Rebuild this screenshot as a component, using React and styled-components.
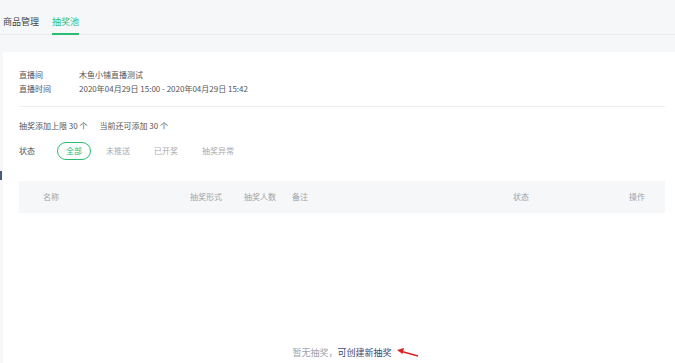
import React from "react";
import styled, { createGlobalStyle, css } from "styled-components";

const GlobalStyle = createGlobalStyle`
  html, body {
    margin: 0;
    padding: 0;
    background: #f6f7f9;
    font-family: "Noto Sans CJK SC", "Noto Sans", sans-serif;
    color: #555;
  }
  * { box-sizing: border-box; }
`;

const Page = styled.div`
  position: relative;
  min-height: 363px;
  display: flex;
  flex-direction: column;
`;

const EdgeMark = styled.span`
  position: absolute;
  left: 0;
  top: 171px;
  width: 2px;
  height: 9px;
  background: #4a5a7a;
`;

const TabBar = styled.div`
  display: flex;
  gap: 13px;
  height: 35px;
  padding-left: 3px;
  border-bottom: 1px solid #e9ebee;
`;

const Tab = styled.div`
  font-size: 9px;
  line-height: 14px;
  padding-top: 15px;
  height: 35px;
  color: #444;
  border-bottom: 2px solid transparent;
  margin-bottom: -1px;
  ${(p) =>
    p.active &&
    css`
      color: #2bbd71;
      border-bottom-color: #2bbd71;
    `}
`;

const Card = styled.div`
  flex: 1;
  margin: 17px 0 0 3px;
  background: #fff;
  padding: 16px 10px 0 16px;
  font-size: 8px;
  line-height: 14px;
`;

const InfoRow = styled.div`
  display: flex;
`;

const Label = styled.span`
  width: 60px;
  color: #555;
`;

const Value = styled.span`
  color: #555;
`;

const Divider = styled.div`
  height: 1px;
  background: #eceef1;
  margin: 10px 0 12px;
`;

const Quota = styled.div`
  display: flex;
  gap: 12px;
  color: #555;
`;

const FilterRow = styled.div`
  display: flex;
  align-items: center;
  gap: 6px;
  margin-top: 9px;
`;

const FilterLabel = styled.span`
  width: 32px;
`;

const Option = styled.span`
  height: 18px;
  line-height: 16px;
  padding: 0 8px;
  border: 1px solid transparent;
  border-radius: 9px;
  color: #a8abb0;
  ${(p) =>
    p.active &&
    css`
      color: #2bbd71;
      border-color: #2bbd71;
    `}
`;

const TableHead = styled.div`
  display: grid;
  grid-template-columns: 147px 54px 48px 221px 116px 1fr;
  align-items: center;
  height: 32px;
  margin-top: 21px;
  padding-left: 24px;
  background: #f6f7f9;
  color: #a0a3a8;
`;

const Empty = styled.div`
  padding-top: 133px;
  text-align: center;
  font-size: 9px;
  color: #a0a3a8;
`;

const EmptyText = styled.span`
  position: relative;
`;

const Link = styled.span`
  color: #34477a;
`;

const Arrow = styled.svg`
  position: absolute;
  left: calc(100% + 5px);
  top: 2px;
`;

const columns = ["名称", "抽奖形式", "抽奖人数", "备注", "状态", "操作"];
const filters = ["全部", "未推送", "已开奖", "抽奖异常"];

export default function App() {
  return (
    <Page>
      <GlobalStyle />
      <EdgeMark />
      <TabBar>
        <Tab>商品管理</Tab>
        <Tab active>抽奖池</Tab>
      </TabBar>
      <Card>
        <InfoRow>
          <Label>直播间</Label>
          <Value>木鱼小铺直播测试</Value>
        </InfoRow>
        <InfoRow>
          <Label>直播时间</Label>
          <Value>2020年04月29日 15:00 - 2020年04月29日 15:42</Value>
        </InfoRow>
        <Divider />
        <Quota>
          <span>抽奖添加上限 30 个</span>
          <span>当前还可添加 30 个</span>
        </Quota>
        <FilterRow>
          <FilterLabel>状态</FilterLabel>
          {filters.map((f, i) => (
            <Option key={f} active={i === 0}>
              {f}
            </Option>
          ))}
        </FilterRow>
        <TableHead>
          {columns.map((c) => (
            <span key={c}>{c}</span>
          ))}
        </TableHead>
        <Empty>
          <EmptyText>
            暂无抽奖，<Link>可创建新抽奖</Link>
            <Arrow width="22" height="10" viewBox="0 0 22 10">
              <line x1="3" y1="3" x2="21" y2="8" stroke="#e02020" strokeWidth="1.4" />
              <polygon points="0,2 7,0 5.5,6" fill="#e02020" />
            </Arrow>
          </EmptyText>
        </Empty>
      </Card>
    </Page>
  );
}
